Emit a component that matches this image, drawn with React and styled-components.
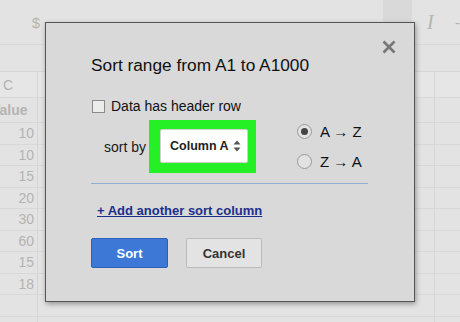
import React from 'react';
import styled, { createGlobalStyle } from 'styled-components';

const GlobalStyle = createGlobalStyle`
    html, body {
        margin: 0;
        padding: 0;
        width: 460px;
        height: 322px;
        overflow: hidden;
        background: #e3e3e3;
        font-family: Arial, 'Liberation Sans', sans-serif;
    }
`

const Page = styled.div`
    position: relative;
    width: 460px;
    height: 322px;
    overflow: hidden;
`

// spreadsheet behind the dialog
const Sheet = styled.div`
    margin-left: -30px;
    width: 500px;
`

const Toolbar = styled.div`
    height: 44px;
    display: flex;
    align-items: center;
    border-bottom: 1px solid #d8d8d8;
    color: #b4b4b4;
    font-size: 15px;
`

const ToolItem = styled.span`
    width: ${p => p.w || 28}px;
    height: 30px;
    margin-left: ${p => p.ml || 0}px;
    display: flex;
    align-items: center;
    justify-content: center;
    font-style: ${p => (p.italic ? 'italic' : 'normal')};
    font-family: ${p => (p.italic ? "'Liberation Serif', serif" : 'inherit')};
    font-size: ${p => (p.italic ? 20 : 15)}px;
    background: ${p => (p.active ? '#d9d9d9' : 'transparent')};
    align-self: ${p => (p.active ? 'flex-start' : 'center')};
`

const FormulaBar = styled.div`
    height: 26px;
    border-bottom: 1px solid #d6d6d6;
`

const Grid = styled.div`
    display: grid;
    grid-template-columns: 68px 397px 1fr;
`

const Cell = styled.div`
    height: ${p => p.h || 21.5}px;
    box-sizing: border-box;
    border-right: 1px solid #d5d5d5;
    border-bottom: 1px solid #d8d8d8;
    display: flex;
    align-items: center;
    justify-content: ${p => p.align || 'flex-end'};
    padding: 0 ${p => p.pr ?? 3}px 0 ${p => p.pl ?? 0}px;
    color: #b3b3b3;
    font-size: ${p => p.fs || 14}px;
    font-weight: ${p => (p.bold ? 700 : 400)};
    background: ${p => (p.head ? '#e6e6e6' : 'transparent')};
`

const Dialog = styled.div`
    position: absolute;
    left: 45px;
    top: 22px;
    width: 370px;
    height: 280px;
    box-sizing: border-box;
    background: #d9d9d9;
    border: 1px solid #555;
    box-shadow: 1px 2px 5px rgba(0, 0, 0, 0.35);
    padding: 32px 0 0 45px;
    color: #111;
`

const Close = styled.button`
    position: absolute;
    right: 17px;
    top: 16px;
    width: 16px;
    height: 16px;
    padding: 0;
    border: 0;
    background: none;
    display: flex;
`

const Title = styled.h2`
    margin: 0;
    font-size: 17.3px;
    line-height: 20px;
    font-weight: 400;
`

const CheckRow = styled.label`
    display: flex;
    align-items: center;
    margin-top: 23px;
    font-size: 14px;
    line-height: 16px;
`

const Box = styled.span`
    width: 13px;
    height: 13px;
    box-sizing: border-box;
    margin: 0 6px 0 1px;
    border: 1px solid #8a8a8a;
    background: #ececec;
`

const SortRow = styled.div`
    display: flex;
    align-items: center;
    margin-top: 6px;
    width: 277px;
    padding-bottom: 10px;
    border-bottom: 1px solid #8fb0cf;
`

const SortLabel = styled.span`
    margin-left: 13px;
    font-size: 14px;
    color: #1a1a1a;
`

const Highlight = styled.div`
    margin-left: 3px;
    width: 107px;
    height: 53px;
    box-sizing: border-box;
    padding: 9px 8px 10px 11px;
    background: #25ef25;
`

const Select = styled.div`
    height: 100%;
    box-sizing: border-box;
    background: #fff;
    border: 1px solid #d0d0d0;
    border-radius: 2px;
    display: flex;
    align-items: center;
    padding: 0 6px 0 9px;
    font-size: 12.5px;
    font-weight: 700;
    color: #222;
    justify-content: space-between;
`

const Radios = styled.div`
    margin-left: 41px;
    display: flex;
    flex-direction: column;
    gap: 14px;
`

const RadioRow = styled.label`
    display: flex;
    align-items: center;
    font-size: 15px;
    line-height: 16px;
    color: #111;
`

const Ring = styled.span`
    width: 15px;
    height: 15px;
    box-sizing: border-box;
    border-radius: 50%;
    border: 1px solid #9a9a9a;
    background: #e2e2e2;
    margin-right: 8px;
    display: flex;
    align-items: center;
    justify-content: center;
    &::after {
        content: '';
        width: 7px;
        height: 7px;
        border-radius: 50%;
        background: ${p => (p.checked ? '#444' : 'transparent')};
    }
`

const AddLink = styled.a`
    display: inline-block;
    margin: 19px 0 0 6px;
    font-size: 13px;
    font-weight: 700;
    color: #1b2f8c;
    text-decoration: underline;
`

const Buttons = styled.div`
    display: flex;
    gap: 18px;
    margin-top: 19px;
`

const Btn = styled.button`
    width: ${p => p.w}px;
    height: 30px;
    border-radius: 2px;
    font-family: inherit;
    font-size: 13px;
    font-weight: 700;
    border: 1px solid ${p => (p.primary ? '#2c5fb5' : '#bcbcbc')};
    background: ${p => (p.primary ? '#3d78d6' : '#e3e3e3')};
    color: ${p => (p.primary ? '#fff' : '#333')};
`

const values = [10, 10, 15, 20, 30, 60, 15, 18, '', ''];

function App() {
    return (
        <Page>
            <GlobalStyle />
            <Sheet>
                <Toolbar>
                    <ToolItem w={10} />
                    <ToolItem ml={30} w={60}>$</ToolItem>
                    <ToolItem ml={320} w={32} active />
                    <ToolItem ml={6} italic>I</ToolItem>
                    <ToolItem ml={2}>-</ToolItem>
                </Toolbar>
                <FormulaBar />
                <Grid>
                    <Cell h={26} head align="flex-start" pl={33} pr={0}>C</Cell>
                    <Cell h={26} head />
                    <Cell h={26} head />
                    <Cell h={25} align="flex-start" pl={21} bold>Value</Cell>
                    <Cell h={25} />
                    <Cell h={25} />
                    {values.map((v, i) => (
                        <React.Fragment key={i}>
                            <Cell fs={14}>{v}</Cell>
                            <Cell />
                            <Cell />
                        </React.Fragment>
                    ))}
                </Grid>
            </Sheet>

            <Dialog>
                <Close aria-label="close">
                    <svg width="16" height="16" viewBox="0 0 16 16">
                        <path d="M2.5 2.5 L13.5 13.5 M13.5 2.5 L2.5 13.5" stroke="#777" strokeWidth="2.6" />
                    </svg>
                </Close>
                <Title>Sort range from A1 to A1000</Title>
                <CheckRow>
                    <Box />
                    Data has header row
                </CheckRow>
                <SortRow>
                    <SortLabel>sort by</SortLabel>
                    <Highlight>
                        <Select>
                            Column A
                            <svg width="8" height="14" viewBox="0 0 8 14">
                                <path d="M0.5 5.5 L4 1.5 L7.5 5.5 Z M0.5 8.5 L4 12.5 L7.5 8.5 Z" fill="#555" />
                            </svg>
                        </Select>
                    </Highlight>
                    <Radios>
                        <RadioRow><Ring checked />A → Z</RadioRow>
                        <RadioRow><Ring />Z → A</RadioRow>
                    </Radios>
                </SortRow>
                <AddLink href="#">+ Add another sort column</AddLink>
                <Buttons>
                    <Btn primary w={77}>Sort</Btn>
                    <Btn w={76}>Cancel</Btn>
                </Buttons>
            </Dialog>
        </Page>
    );
}

export default App;
